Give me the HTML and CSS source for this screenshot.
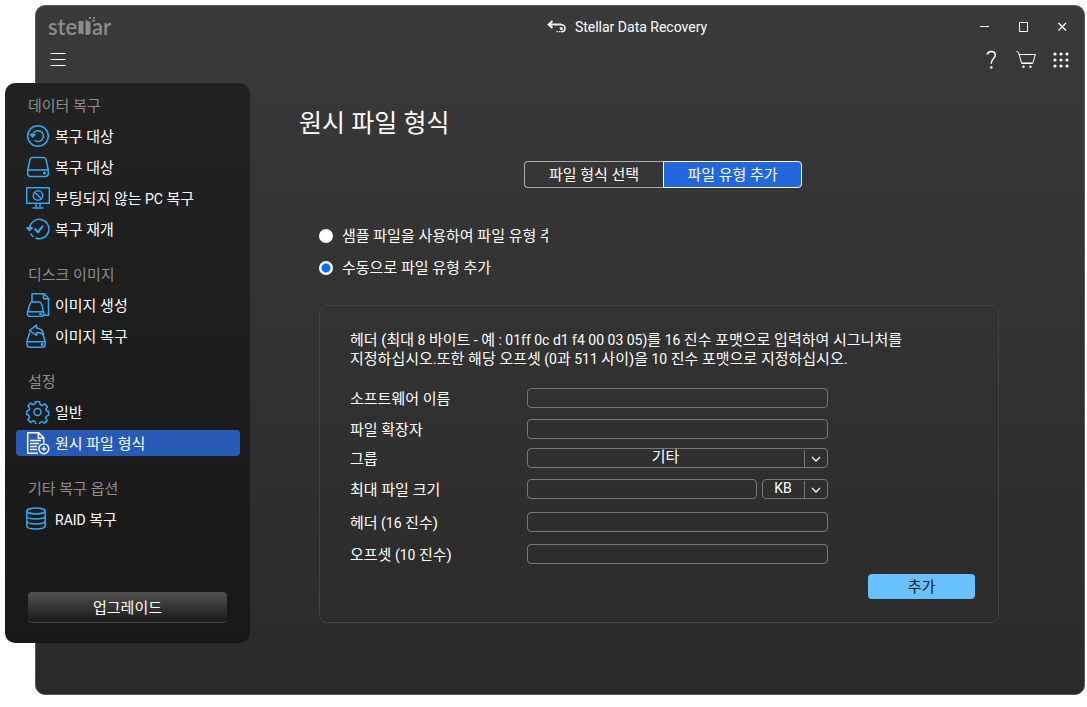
FILE: index.html
```html
<!DOCTYPE html>
<html lang="ko">
<head>
<meta charset="utf-8">
<meta name="viewport" content="width=device-width, initial-scale=1">
<title>Stellar Data Recovery</title>
<link rel="stylesheet" href="styles.css">
</head>
<body>
<div class="app">
  <div class="window">
    <header class="titlebar">
      <svg class="logo" width="72" height="34" viewBox="0 -6 72 34" role="img" aria-label="stellar">
        <text class="logo-text" x="0" y="19">ste</text>
        <path d="M30.500 5h5v14l-2-1.500-3 .5zM37.500 4l5 2v11l-2 2h-3z"/>
        <path d="M41 1h2v2h-2zM45 1h2v2h-2zM44 4h3v1.500h-3z"/>
        <text class="logo-text" x="44" y="19">ar</text>
      </svg>
      <div class="app-title">
        <svg width="20" height="14" viewBox="0 0 20 14" fill="none" stroke="#f4f4f4">
          <path stroke-width="1.800" d="M5.500 1L1.500 4.500l4 3.500M2 4.500h12"/>
          <path stroke-width="1.600" d="M13 4.500c3.500 0 5 1.500 5 3.800s-1.800 3.500-4 3.500"/>
          <circle cx="14.300" cy="8.400" r="1.500" fill="#f4f4f4" stroke="none"/>
          <path stroke-width="1.200" stroke-dasharray="1.500 1" d="M9.500 11.600h4"/>
        </svg>
        <span>Stellar Data Recovery</span>
      </div>
      <div class="window-controls">
        <button type="button" aria-label="최소화"><svg width="14" height="14" viewBox="0 0 14 14"><path d="M2 6.500h9"/></svg></button>
        <button type="button" aria-label="최대화"><svg width="14" height="14" viewBox="0 0 14 14"><path d="M2.500 2.500h8v9h-8z"/></svg></button>
        <button type="button" aria-label="닫기"><svg width="14" height="14" viewBox="0 0 14 14"><path stroke-width="1.400" d="M2.500 3l7.500 7.500M10 3L2.500 10.500"/></svg></button>
      </div>
    </header>
    <div class="toolbar">
      <button type="button" aria-label="메뉴"><svg width="16" height="20" viewBox="0 0 16 20"><path d="M.5 3.500h15M.5 9.500h15M.5 15.500h15"/></svg></button>
      <div class="toolbar-actions">
        <button type="button" aria-label="도움말"><svg width="20" height="20" viewBox="0 0 20 20"><path stroke-width="1.500" d="M6 4.500C7 1.800 9 1.500 10.300 1.500c2.500 0 4 1.500 4 3.700C14.300 8.500 10.300 8.500 10.300 13v.7"/><circle cx="10.300" cy="17.500" r="1.300" fill="#fff" stroke="none"/></svg></button>
        <button type="button" aria-label="구매"><svg width="20" height="20" viewBox="0 0 20 20"><path d="M.5 1.500l2 .8 3.200 11.200h11L19.300 4.500H3.300"/><path stroke="#aaa" d="M6 12.500h10.500"/><circle cx="7.500" cy="16.700" r="1.200" fill="#fff" stroke="none"/><circle cx="14.500" cy="16.700" r="1.200" fill="#fff" stroke="none"/></svg></button>
        <button type="button" aria-label="앱"><svg class="dots" width="20" height="20" viewBox="0 0 20 20"><circle cx="4" cy="4" r="1.600"/><circle cx="10" cy="4" r="1.600"/><circle cx="16" cy="4" r="1.600"/><circle cx="4" cy="10" r="1.600"/><circle cx="10" cy="10" r="1.600"/><circle cx="16" cy="10" r="1.600"/><circle cx="4" cy="16" r="1.600"/><circle cx="10" cy="16" r="1.600"/><circle cx="16" cy="16" r="1.600"/></svg></button>
      </div>
    </div>
    <main class="content">
      <h1>원시 파일 형식</h1>
      <div class="body">
        <div class="tabs">
          <button type="button" class="tab">파일 형식 선택</button>
          <button type="button" class="tab tab-active">파일 유형 추가</button>
        </div>
        <div class="modes">
          <label class="mode"><input type="radio" name="mode"><span class="mode-text">샘플 파일을 사용하여 파일 유형 추가</span></label>
          <label class="mode"><input type="radio" name="mode" checked><span class="mode-text">수동으로 파일 유형 추가</span></label>
        </div>
        <form class="panel">
          <p class="hint">헤더 (최대<span class="latin"> 8 </span>바이트<span class="latin"> - </span>예<span class="latin"> : 01ff 0c d1 f4 00 03 05)</span>를<span class="latin"> 16 </span>진수 포맷으로 입력하여 시그니처를<br>지정하십시오.또한 해당 오프셋<span class="latin"> (0</span>과<span class="latin"> 511 </span>사이)을<span class="latin"> 10 </span>진수 포맷으로 지정하십시오.</p>
          <div class="fields">
            <label for="software">소프트웨어 이름</label>
            <input class="field" id="software" type="text">
            <label for="extension">파일 확장자</label>
            <input class="field" id="extension" type="text">
            <label for="group">그룹</label>
            <div class="select">
              <select class="field" id="group"><option>기타</option></select>
              <svg width="24" height="18" viewBox="0 0 24 18"><path class="divider" d="M.5 1v17"/><path d="M8 8l4 4 4-4"/></svg>
            </div>
            <label for="size">최대 파일 크기</label>
            <div class="size">
              <input class="field" id="size" type="text">
              <div class="select">
                <select class="field latin" aria-label="단위"><option>KB</option></select>
                <svg width="24" height="18" viewBox="0 0 24 18"><path class="divider" d="M.5 1v17"/><path d="M8 8l4 4 4-4"/></svg>
              </div>
            </div>
            <label for="header">헤더<span class="latin"> (16 </span>진수)</label>
            <input class="field" id="header" type="text">
            <label for="offset">오프셋<span class="latin"> (10 </span>진수)</label>
            <input class="field" id="offset" type="text">
          </div>
          <button type="button" class="add">추가</button>
        </form>
      </div>
    </main>
  </div>

  <nav class="sidebar">
    <section class="group">
      <h2>데이터 복구</h2>
      <a class="item" href="#"><svg width="24" height="24" viewBox="0 0 24 24"><circle cx="12" cy="12" r="10.300"/><path d="M6.700 11A5.400 5.400 0 1 1 8.500 16.200"/><path d="M4.500 10.500h4.600L6.700 13z" fill="#2fa8f5"/></svg><span>복구 대상</span></a>
      <a class="item" href="#"><svg width="24" height="24" viewBox="0 0 24 24"><path d="M1.700 15L4 4.500Q4.500 2.500 6.500 2.500h11Q19.500 2.500 20 4.500L22.300 15v3.500q0 3-3 3H4.700q-3 0-3-3zM2 15h20"/><circle cx="18.500" cy="18" r=".8"/></svg><span>복구 대상</span></a>
      <a class="item" href="#"><svg width="24" height="24" viewBox="0 0 24 24"><path d="M.7 1.700h22.600v15.600H.7zM10 17.500V21M14 17.500V21M6.500 22h11"/><circle cx="12" cy="9.500" r="4.700"/><path d="M8.700 6.200l6.600 6.600"/></svg><span>부팅되지 않는<span class="latin"> PC </span>복구</span></a>
      <a class="item" href="#"><svg width="24" height="24" viewBox="0 0 24 24"><path d="M3.500 12A9.700 9.700 0 1 1 9.500 21M4.500 16.500a9.700 9.700 0 0 0 3 3.500"/><path d="M.8 10.800h5.400l-2.700 2.700z" fill="#2fa8f5"/><path stroke-width="2" d="M8.500 11.500l3.500 3.700 5-6.500"/></svg><span>복구 재개</span></a>
    </section>
    <section class="group">
      <h2>디스크 이미지</h2>
      <a class="item" href="#"><svg width="24" height="24" viewBox="0 0 24 24"><path d="M6 9V.8h12l4.500 4.500v17H18M17.500 1v4.800h5"/><path d="M1.500 19L4 11Q4.500 9 6.500 9h6.500q2 0 2.500 2L17.700 19v2q0 2.500-2.500 2.500H4q-2.500 0-2.500-2.500zM2 18.700h15"/><circle cx="14.500" cy="21" r=".7"/></svg><span>이미지 생성</span></a>
      <a class="item" href="#"><svg width="24" height="24" viewBox="0 0 24 24"><path d="M4 8.500q-1 1-1.300 3L1 17.500v3.300q0 2.400 2.400 2.400h13.200q2.400 0 2.400-2.400v-3.300l-2-7.500M1 17.800h18"/><path d="M3.500 6.700L10.500 1v3q6.500.5 7 7-2.500-2.500-7-2.500v3z"/><circle cx="16" cy="20.500" r=".7"/></svg><span>이미지 복구</span></a>
    </section>
    <section class="group">
      <h2>설정</h2>
      <a class="item" href="#"><svg width="24" height="24" viewBox="0 0 24 24"><circle cx="11.500" cy="12" r="3.500"/><path d="M9.500 1.700h4l.7 3 1.800.8 2.700-1.600 2.700 2.700-1.600 2.700.8 1.800 2 .4v3.900l-2.200.7-.8 1.800 1.600 2.700-2.700 2.600-2.600-1.600-1.900.8-.6 2.200H9.700L9 21.600l-1.800-.8-2.600 1.600-2.700-2.600 1.600-2.700-.8-1.900-2-.6v-3.300l2.200-1 .7-1.800-1.600-2.700 2.700-2.700 2.600 1.600 1.700-.8z"/></svg><span>일반</span></a>
      <a class="item item-active" href="#" aria-current="page"><svg width="24" height="24" viewBox="0 0 24 24"><path d="M12 22.300H1.700V1.700h11l5 5v5M12.300 1.700v5.500h5.400M4 9.500h11M4 12.500h9M4 15.500h7M4 18.500h7"/><circle cx="17.800" cy="17.800" r="4.900"/><path d="M17.800 15.500v4.600M15.500 17.800h4.600"/></svg><span>원시 파일 형식</span></a>
    </section>
    <section class="group">
      <h2>기타 복구 옵션</h2>
      <a class="item" href="#"><svg width="24" height="24" viewBox="0 0 24 24"><ellipse cx="10" cy="4" rx="9.200" ry="2.900"/><path d="M.8 4v15c0 4 18.400 4 18.400 0V4M.8 9c0 4 18.400 4 18.400 0M.8 14c0 4 18.400 4 18.400 0"/></svg><span><span class="latin">RAID </span>복구</span></a>
    </section>
    <button type="button" class="upgrade">업그레이드</button>
  </nav>
</div>
</body>
</html>
```
FILE: styles.css
```css
* {
  box-sizing: border-box;
}

body {
  margin: 0;
  background: #fff;
  color: #fff;
  font: 15px/20px Roboto, "Noto Sans CJK KR", sans-serif;
}

button,
input,
select {
  margin: 0;
  padding: 0;
  border: 0;
  background: none;
  color: inherit;
  font: inherit;
}

svg {
  display: block;
  flex: none;
}

h1,
h2,
p {
  margin: 0;
  font-weight: 400;
}

/* Latin runs are set one size below the Hangul around them. */
.latin {
  font-size: 14px;
}

/* The sidebar shares the second column with the window and hangs out on the left. */
.app {
  display: grid;
  grid-template-columns: 30px 215px 1fr;
  grid-template-rows: 78px auto 1fr;
  min-height: 100vh;
  padding: 5px 2px 12px 5px;
}

.window {
  grid-area: 1 / 2 / -1 / -1;
  border: 1px solid #5a5a5a;
  border-radius: 10px;
  background: linear-gradient(#3a3a3a, #353535 30%, #2a2a2a);
}

.sidebar {
  display: flex;
  flex-direction: column;
  grid-area: 2 / 1 / 3 / 3;
  gap: 19px;
  padding: 9px 10px 20px 11px;
  border-radius: 10px;
  background: linear-gradient(#222, #181818);
}

/* Title bar */
.titlebar {
  display: grid;
  grid-template-columns: 11fr auto 8fr;
  align-items: center;
  height: 42px;
  padding: 0 14px 0 12px;
}

.logo {
  fill: #8c8c8c;
}

.logo-text {
  font: 600 22px Lato, sans-serif;
}

.app-title {
  display: flex;
  align-items: center;
  gap: 8px;
  font-size: 14px;
}

.window-controls {
  display: flex;
  justify-content: flex-end;
  gap: 25px;
}

.window-controls svg,
.toolbar svg {
  fill: none;
  stroke: #fff;
  stroke-width: 1;
}

.toolbar {
  display: flex;
  align-items: center;
  justify-content: space-between;
  height: 24px;
  padding: 0 13px 0 14px;
}

.toolbar-actions {
  display: flex;
  gap: 15px;
}

.toolbar .dots {
  fill: #fff;
  stroke: none;
}

/* Sidebar */
.group {
  display: flex;
  flex-direction: column;
  gap: 5px;
}

.group h2 {
  padding: 2px 0 0 12px;
  color: #8c8c8c;
  font-size: 15px;
  line-height: 24px;
}

.item {
  display: flex;
  align-items: center;
  gap: 5px;
  height: 26px;
  padding-left: 10px;
  border-radius: 4px;
  color: #fff;
  text-decoration: none;
}

.item > span {
  padding-top: 2px;
}

.item svg {
  fill: none;
  stroke: #2fa8f5;
  stroke-width: 1.5;
  stroke-linejoin: round;
}

.item-active {
  background: #285bb8;
}

.item-active svg {
  stroke: #fff;
}

.upgrade {
  height: 31px;
  margin: 41px 13px 0 12px;
  padding-top: 2px;
  border-bottom: 1px solid #484848;
  border-radius: 4px;
  background: linear-gradient(#505050, #1a1a1a);
}

/* Content */
.content {
  padding: 36px 85px 71px 263px;
}

h1 {
  font-size: 25px;
  line-height: 32px;
}

.body {
  padding-left: 20px;
}

.tabs {
  display: flex;
  justify-content: center;
  margin-top: 21px;
  padding-left: 8px;
}

.tab {
  width: 139px;
  height: 27px;
  border: 1px solid #aaa;
  border-right: 0;
  border-radius: 4px 0 0 4px;
}

.tab-active {
  border: 1px solid #fff;
  border-radius: 0 4px 4px 0;
  background: #2467dc;
}

.modes {
  display: flex;
  flex-direction: column;
  align-items: flex-start;
  gap: 12px;
  margin-top: 38px;
}

.mode {
  display: flex;
  align-items: center;
  gap: 9px;
}

.mode input {
  appearance: none;
  width: 14px;
  height: 14px;
  border-radius: 50%;
  background: #fff;
}

.mode input:checked {
  background: radial-gradient(circle, #0a6cf5 4px, #fff 5px);
}

.mode-text {
  max-width: 206px;
  padding-top: 1px;
  line-height: 19px;
  overflow: hidden;
  white-space: nowrap;
}

.panel {
  display: flex;
  flex-direction: column;
  margin-top: 27px;
  padding: 25px 23px 23px 30px;
  border: 1px solid #424242;
  border-radius: 8px;
}

.hint {
  line-height: 19px;
}

.fields {
  display: grid;
  grid-template-columns: 177px 301px;
  grid-template-rows: 31px 29px 31px 33px 32px 20px;
  align-items: start;
  margin-top: 19px;
}

.fields label {
  padding-top: 1px;
}

.field {
  width: 100%;
  min-width: 0;
  height: 20px;
  padding: 0 4px;
  border: 1px solid #777;
  border-radius: 4px;
}

.select {
  display: grid;
  align-items: center;
}

.select > * {
  grid-area: 1 / 1;
}

.select select {
  appearance: none;
  padding: 0 24px 2px 0;
  line-height: 16px;
  text-align: center;
  text-align-last: center;
}

.select svg {
  justify-self: end;
  fill: none;
  stroke: #fff;
  stroke-width: 1.3;
  pointer-events: none;
}

.select .divider {
  stroke: #777;
  stroke-width: 1;
}

.select option {
  background: #333;
}

.size {
  display: grid;
  grid-template-columns: 1fr 66px;
  gap: 5px;
}

.add {
  align-self: flex-end;
  width: 107px;
  height: 25px;
  margin-top: 10px;
  border-radius: 4px;
  background: #69c0ff;
  color: #0c1a2a;
}
```
